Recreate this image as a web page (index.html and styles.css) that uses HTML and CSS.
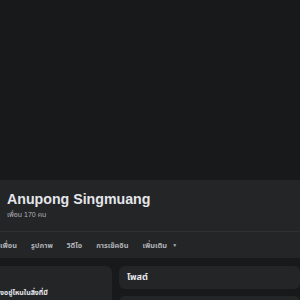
FILE: index.html
```html
<!DOCTYPE html>
<html lang="th">
<head>
<meta charset="utf-8">
<link rel="stylesheet" href="styles.css">
</head>
<body>
<div class="cover"></div>
<header class="profile-head">
  <div class="identity">
    <h1 class="name">Anupong Singmuang</h1>
    <div class="friends">เพื่อน 170 คน</div>
  </div>
  <nav class="tabs">
    <span class="tab">เพื่อน</span>
    <span class="tab">รูปภาพ</span>
    <span class="tab">วิดีโอ</span>
    <span class="tab">การเช็คอิน</span>
    <span class="tab">เพิ่มเติม <span class="caret">▼</span></span>
  </nav>
</header>
<main class="content">
  <section class="card intro">
    <p class="intro-text">งอยู่ไหนในสิ่งที่มี</p>
  </section>
  <div class="feed">
    <section class="card posts-head">โพสต์</section>
    <section class="card post"></section>
  </div>
</main>
</body>
</html>
```
FILE: styles.css
```css
html, body {
  margin: 0;
  padding: 0;
  background: #18191a;
  font-family: "Liberation Sans", "Noto Sans", "Noto Sans Thai", sans-serif;
  color: #e4e6eb;
  overflow: hidden;
}
.cover {
  height: 180px;
  background: #18191a;
}
.profile-head {
  background: #242526;
}
.identity {
  padding: 11px 7px 0;
  box-sizing: border-box;
  border-bottom: 1px solid #2f3031;
  height: 52px;
}
.name {
  margin: 0;
  font-size: 14.2px;
  font-weight: bold;
  line-height: 17px;
}
.friends {
  font-size: 7px;
  color: #b0b3b8;
  line-height: 12px;
  margin-top: 1px;
}
.tabs {
  display: flex;
  gap: 14px;
  height: 26px;
  align-items: center;
  padding-left: 0;
  font-size: 7.4px;
  font-weight: bold;
  color: #b0b3b8;
}
.caret {
  font-size: 5px;
  margin-left: 3px;
  vertical-align: 1px;
}
.content {
  display: grid;
  grid-template-columns: 112px 1fr;
  gap: 7px;
  margin-top: 8px;
}
.card {
  background: #242526;
  border-radius: 6px;
}
.intro {
  border-top-left-radius: 0;
  border-bottom-left-radius: 0;
  height: 60px;
}
.intro-text {
  margin: 0;
  padding-top: 22px;
  font-size: 7px;
  font-weight: bold;
  color: #e4e6eb;
}
.feed {
  display: flex;
  flex-direction: column;
  gap: 7px;
}
.posts-head {
  height: 23px;
  line-height: 23px;
  padding-left: 8px;
  font-size: 9px;
  font-weight: bold;
}
.post {
  height: 40px;
}
```
